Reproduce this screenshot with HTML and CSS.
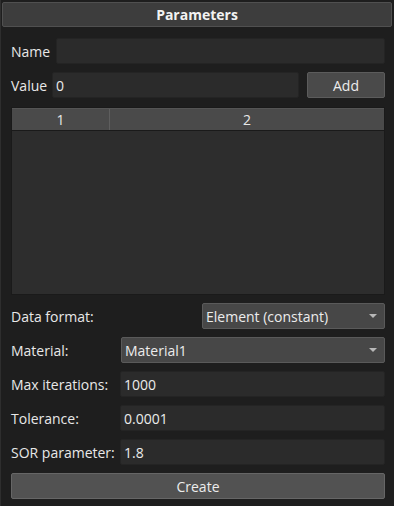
FILE: index.html
```html
<!DOCTYPE html>
<html lang="en">
<head>
  <meta charset="UTF-8">
  <title>Parameters</title>
  <link rel="stylesheet" href="styles.css">
</head>
<body>
  <div class="dock">
    <div class="dock-title">Parameters</div>

    <div class="content">
      <div class="row">
        <label class="lbl">Name</label>
        <input type="text" class="field name-field" value="">
      </div>

      <div class="row">
        <label class="lbl">Value</label>
        <input type="text" class="field value-field" value="0">
        <button class="btn add-btn">Add</button>
      </div>

      <div class="table">
        <div class="table-head">
          <div class="col col-1">1</div>
          <div class="col col-2">2</div>
        </div>
        <div class="table-body"></div>
      </div>

      <div class="row row-format">
        <label class="lbl">Data format:</label>
        <div class="combo format-combo">
          <span>Element (constant)</span>
          <span class="caret"></span>
        </div>
      </div>

      <div class="row">
        <label class="lbl form-lbl">Material:</label>
        <div class="combo material-combo">
          <span>Material1</span>
          <span class="caret"></span>
        </div>
      </div>

      <div class="row">
        <label class="lbl form-lbl">Max iterations:</label>
        <input type="text" class="field" value="1000">
      </div>

      <div class="row">
        <label class="lbl form-lbl">Tolerance:</label>
        <input type="text" class="field" value="0.0001">
      </div>

      <div class="row">
        <label class="lbl form-lbl">SOR parameter:</label>
        <input type="text" class="field" value="1.8">
      </div>

      <button class="btn create-btn">Create</button>
    </div>
  </div>
</body>
</html>
```

FILE: styles.css
```css
html, body {
  margin: 0;
  padding: 0;
  background-color: #1e1e1e;
}
body {
  font-family: "Open Sans", "Noto Sans", sans-serif;
  font-size: 14px;
  color: #e8e8e8;
  width: 394px;
  height: 506px;
  overflow: hidden;
}
.dock {
  height: 506px;
  box-sizing: border-box;
  border-left: 1px solid #2e2e2e;
  padding: 2px 2px 0 1px;
}
.dock-title {
  height: 25px;
  line-height: 24px;
  box-sizing: border-box;
  background-color: #3d3d3d;
  border: 1px solid #505050;
  border-radius: 2px;
  text-align: center;
  font-weight: bold;
  color: #f2f2f2;
}
.content {
  padding: 11px 7px 0 9px;
  display: flex;
  flex-direction: column;
  gap: 8px;
}
.row {
  display: flex;
  align-items: center;
  gap: 5px;
  height: 26px;
}
.lbl {
  white-space: nowrap;
  color: #e8e8e8;
}
.form-lbl {
  width: 104px;
  flex: none;
}
.field {
  flex: 1;
  height: 26px;
  box-sizing: border-box;
  background-color: #2b2b2b;
  border: 1px solid #242424;
  border-radius: 2px;
  color: #ececec;
  font-family: inherit;
  font-size: inherit;
  padding: 0 3px;
  outline: none;
  min-width: 0;
}
.name-field {
  margin-left: 1px;
}
.btn {
  height: 26px;
  box-sizing: border-box;
  background-color: #4a4a4a;
  border: 1px solid #5c5c5c;
  border-radius: 2px;
  color: #ececec;
  font-family: inherit;
  font-size: inherit;
  padding: 0;
}
.add-btn {
  width: 78px;
  margin-left: 3px;
}
.table {
  height: 188px;
  box-sizing: border-box;
  border: 1px solid #1a1a1a;
  background-color: #2d2d2d;
  display: flex;
  flex-direction: column;
  margin-top: 1px;
}
.table-head {
  display: flex;
  height: 23px;
  background-color: #4a4a4a;
  border-top: 1px solid #555;
  border-bottom: 1px solid #1a1a1a;
  box-sizing: border-box;
}
.col {
  text-align: center;
  line-height: 21px;
}
.col-1 {
  width: 97px;
  border-right: 1px solid #5e5e5e;
}
.col-2 {
  flex: 1;
}
.table-body {
  flex: 1;
}
.row-format {
  justify-content: space-between;
}
.combo {
  height: 26px;
  box-sizing: border-box;
  background-color: #474747;
  border: 1px solid #5a5a5a;
  border-radius: 2px;
  display: flex;
  align-items: center;
  justify-content: space-between;
  padding: 0 7px 0 3px;
  color: #ececec;
}
.format-combo {
  width: 183px;
}
.material-combo {
  flex: 1;
  margin-left: 1px;
}
.caret {
  width: 0;
  height: 0;
  border-left: 4px solid transparent;
  border-right: 4px solid transparent;
  border-top: 4px solid #b8b8b8;
}
.create-btn {
  width: 374px;
  background-color: #525252;
  border-color: #666;
}
```
